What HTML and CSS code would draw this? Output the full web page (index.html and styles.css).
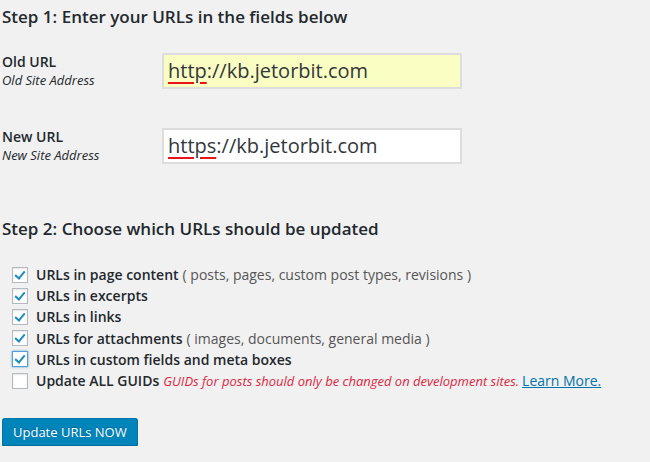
FILE: index.html
```html
<!DOCTYPE html>
<html>
<head>
<meta charset="utf-8">
<link rel="stylesheet" href="styles.css">
</head>
<body>
<div class="wrap">
  <h3 class="step">Step 1: Enter your URLs in the fields below</h3>
  <div class="field-row">
    <div class="field-label">
      <strong>Old URL</strong>
      <em>Old Site Address</em>
    </div>
    <div class="url-input old"><span class="spell">http</span>://kb.jetorbit.com</div>
  </div>
  <div class="field-row">
    <div class="field-label">
      <strong>New URL</strong>
      <em>New Site Address</em>
    </div>
    <div class="url-input"><span class="spell">https</span>://kb.jetorbit.com</div>
  </div>
  <h3 class="step step2">Step 2: Choose which URLs should be updated</h3>
  <ul class="options">
    <li><span class="cb checked"></span><strong>URLs in page content</strong> <span class="note">( posts, pages, custom post types, revisions )</span></li>
    <li><span class="cb checked"></span><strong>URLs in excerpts</strong></li>
    <li><span class="cb checked"></span><strong>URLs in links</strong></li>
    <li><span class="cb checked"></span><strong>URLs for attachments</strong> <span class="note">( images, documents, general media )</span></li>
    <li><span class="cb checked focus"></span><strong>URLs in custom fields and meta boxes</strong></li>
    <li><span class="cb"></span><strong>Update ALL GUIDs</strong> <em class="warn">GUIDs for posts should only be changed on development sites.</em> <a href="#" class="more">Learn More.</a></li>
  </ul>
  <button class="btn">Update URLs NOW</button>
</div>
</body>
</html>
```
FILE: styles.css
```css
html, body {
  margin: 0;
  padding: 0;
  background: #f1f1f1;
  color: #23282d;
  font-family: "Open Sans", "Noto Sans", sans-serif;
}
.wrap {
  padding: 4px 2px 0 2px;
}
.step {
  margin: 0;
  font-size: 17px;
  font-weight: 600;
  line-height: 26px;
}
.field-row {
  display: flex;
  align-items: flex-start;
  margin-top: 23px;
}
.field-row + .field-row {
  margin-top: 38px;
}
.field-label {
  width: 160px;
  display: flex;
  flex-direction: column;
}
.field-label strong {
  font-size: 14px;
  font-weight: 600;
  line-height: 17px;
}
.field-label em {
  font-size: 13px;
  line-height: 20px;
}
.url-input {
  width: 292px;
  height: 32px;
  border: 2px solid #ddd;
  background: #fff;
  font-size: 20px;
  line-height: 32px;
  padding-left: 4px;
  color: #32373c;
  box-sizing: content-box;
}
.url-input.old {
  background: #fafec3;
}
.spell {
  text-decoration: underline;
  text-decoration-color: #e8141a;
  text-decoration-thickness: 2px;
  text-underline-offset: 4px;
}
.step2 {
  margin-top: 51px;
}
.options {
  list-style: none;
  margin: 22px 0 0 0;
  padding: 0 0 0 10px;
}
.options li {
  display: flex;
  align-items: center;
  height: 21.2px;
  font-size: 14px;
  white-space: nowrap;
}
.options strong {
  font-weight: 600;
  margin-right: 4px;
}
.note {
  color: #555;
}
.cb {
  width: 14px;
  height: 14px;
  border: 1px solid #b4b9be;
  background: #fff;
  margin-right: 8px;
  flex: none;
  position: relative;
  box-shadow: inset 0 1px 2px rgba(0,0,0,0.1);
}
.cb.focus {
  border-color: #5b9dd9;
  box-shadow: 0 0 2px rgba(30,140,190,0.8);
}
.cb.checked::after {
  content: "";
  position: absolute;
  left: 4px;
  top: 1px;
  width: 4px;
  height: 8px;
  border: solid #1e8cbe;
  border-width: 0 2px 2px 0;
  transform: rotate(40deg);
}
.warn {
  color: #e0263e;
  font-size: 13px;
  margin-right: 3px;
}
.more {
  color: #0073aa;
  text-decoration: underline;
}
.btn {
  margin-top: 27px;
  background: #0085ba;
  border: 1px solid #0073aa;
  border-bottom-color: #006799;
  border-radius: 3px;
  color: #fff;
  font-family: "Open Sans", "Noto Sans", sans-serif;
  font-size: 13px;
  height: 28px;
  padding: 0 10px;
  box-shadow: 0 1px 0 #006799;
  text-shadow: 0 -1px 1px #006799;
}
```
